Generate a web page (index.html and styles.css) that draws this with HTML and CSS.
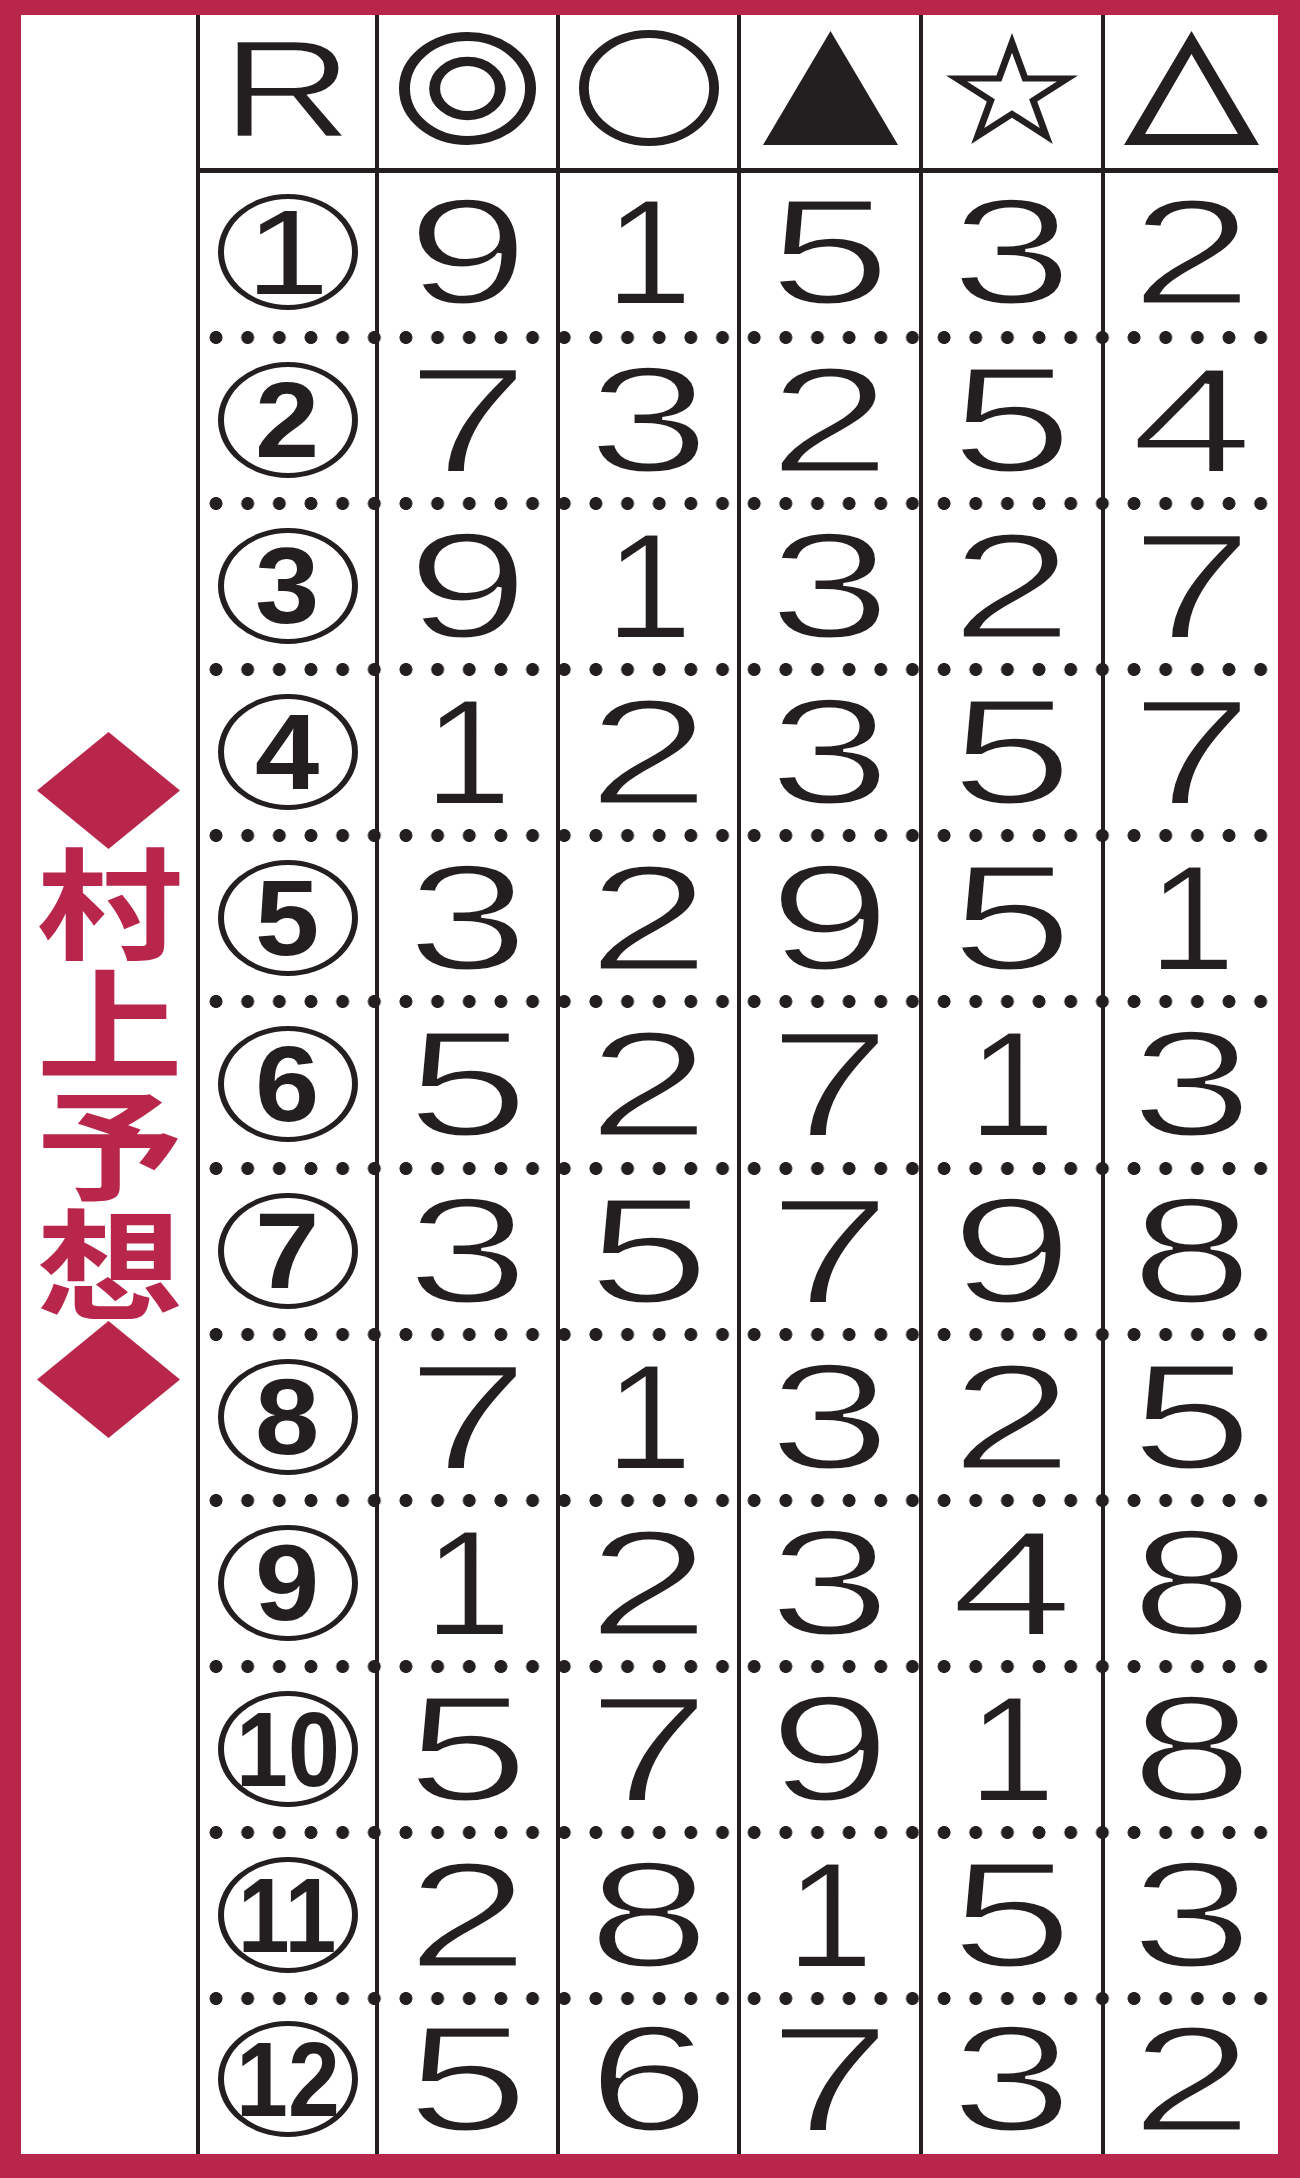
FILE: index.html
```html
<!DOCTYPE html>
<html lang="ja">
<head>
<meta charset="utf-8">
<title>村上予想</title>
<link rel="stylesheet" href="styles.css">
</head>
<body>
<div class="frame">
  <aside class="side">
    <svg class="diamond" viewBox="0 0 100 100" preserveAspectRatio="none"><polygon points="50,0 100,50 50,100 0,50"/></svg>
    <div class="title">村上予想</div>
    <svg class="diamond" viewBox="0 0 100 100" preserveAspectRatio="none"><polygon points="50,0 100,50 50,100 0,50"/></svg>
  </aside>
  <div class="table">
    <div class="row head">
      <div><span class="rh">R</span></div>
      <div><svg class="mk mk-dbl" viewBox="0 0 100 100" preserveAspectRatio="none"><circle cx="50" cy="50" r="46"/><circle cx="50" cy="50" r="24"/></svg></div>
      <div><svg class="mk mk-ring" viewBox="0 0 100 100" preserveAspectRatio="none"><circle cx="50" cy="50" r="46.5"/></svg></div>
      <div><svg class="mk mk-tri" viewBox="0 0 100 100" preserveAspectRatio="none"><polygon points="50,0 100,100 0,100"/></svg></div>
      <div><svg class="mk mk-star" viewBox="0 0 100 100" preserveAspectRatio="none"><path fill-rule="evenodd" d="M50 0 L61.8 38.2 L100 38.2 L69.1 61.8 L80.9 100 L50 76.4 L19.1 100 L30.9 61.8 L0 38.2 L38.2 38.2 Z M50 17.69 L41.98 43.67 L16 43.67 L37.01 59.71 L28.99 85.69 L50 69.64 L71.01 85.69 L62.99 59.71 L84 43.67 L58.02 43.67 Z"/></svg></div>
      <div><svg class="mk mk-otri" viewBox="0 0 100 100" preserveAspectRatio="none"><path fill-rule="evenodd" d="M50 0 L100 100 L0 100 Z M50 20.2 L15.6 90.4 L84.4 90.4 Z"/></svg></div>
    </div>

    <div class="row first">
      <div><span class="circ"><span class="cn c1">1</span></span></div>
      <div><span class="n">9</span></div><div><span class="n one">1</span></div><div><span class="n">5</span></div><div><span class="n">3</span></div><div><span class="n">2</span></div>
    </div>
    <div class="sep"><div></div><div></div><div></div><div></div><div></div><div></div></div>
    <div class="row mid">
      <div><span class="circ"><span class="cn">2</span></span></div>
      <div><span class="n">7</span></div><div><span class="n">3</span></div><div><span class="n">2</span></div><div><span class="n">5</span></div><div><span class="n">4</span></div>
    </div>
    <div class="sep"><div></div><div></div><div></div><div></div><div></div><div></div></div>
    <div class="row mid">
      <div><span class="circ"><span class="cn">3</span></span></div>
      <div><span class="n">9</span></div><div><span class="n one">1</span></div><div><span class="n">3</span></div><div><span class="n">2</span></div><div><span class="n">7</span></div>
    </div>
    <div class="sep"><div></div><div></div><div></div><div></div><div></div><div></div></div>
    <div class="row mid">
      <div><span class="circ"><span class="cn">4</span></span></div>
      <div><span class="n one">1</span></div><div><span class="n">2</span></div><div><span class="n">3</span></div><div><span class="n">5</span></div><div><span class="n">7</span></div>
    </div>
    <div class="sep"><div></div><div></div><div></div><div></div><div></div><div></div></div>
    <div class="row mid">
      <div><span class="circ"><span class="cn">5</span></span></div>
      <div><span class="n">3</span></div><div><span class="n">2</span></div><div><span class="n">9</span></div><div><span class="n">5</span></div><div><span class="n one">1</span></div>
    </div>
    <div class="sep"><div></div><div></div><div></div><div></div><div></div><div></div></div>
    <div class="row mid">
      <div><span class="circ"><span class="cn">6</span></span></div>
      <div><span class="n">5</span></div><div><span class="n">2</span></div><div><span class="n">7</span></div><div><span class="n one">1</span></div><div><span class="n">3</span></div>
    </div>
    <div class="sep"><div></div><div></div><div></div><div></div><div></div><div></div></div>
    <div class="row mid">
      <div><span class="circ"><span class="cn">7</span></span></div>
      <div><span class="n">3</span></div><div><span class="n">5</span></div><div><span class="n">7</span></div><div><span class="n">9</span></div><div><span class="n">8</span></div>
    </div>
    <div class="sep"><div></div><div></div><div></div><div></div><div></div><div></div></div>
    <div class="row mid">
      <div><span class="circ"><span class="cn">8</span></span></div>
      <div><span class="n">7</span></div><div><span class="n one">1</span></div><div><span class="n">3</span></div><div><span class="n">2</span></div><div><span class="n">5</span></div>
    </div>
    <div class="sep"><div></div><div></div><div></div><div></div><div></div><div></div></div>
    <div class="row mid">
      <div><span class="circ"><span class="cn">9</span></span></div>
      <div><span class="n one">1</span></div><div><span class="n">2</span></div><div><span class="n">3</span></div><div><span class="n">4</span></div><div><span class="n">8</span></div>
    </div>
    <div class="sep"><div></div><div></div><div></div><div></div><div></div><div></div></div>
    <div class="row mid">
      <div><span class="circ"><span class="cn c2">10</span></span></div>
      <div><span class="n">5</span></div><div><span class="n">7</span></div><div><span class="n">9</span></div><div><span class="n one">1</span></div><div><span class="n">8</span></div>
    </div>
    <div class="sep"><div></div><div></div><div></div><div></div><div></div><div></div></div>
    <div class="row mid">
      <div><span class="circ"><span class="cn c2">11</span></span></div>
      <div><span class="n">2</span></div><div><span class="n">8</span></div><div><span class="n one">1</span></div><div><span class="n">5</span></div><div><span class="n">3</span></div>
    </div>
    <div class="sep"><div></div><div></div><div></div><div></div><div></div><div></div></div>
    <div class="row last">
      <div><span class="circ"><span class="cn c2">12</span></span></div>
      <div><span class="n">5</span></div><div><span class="n">6</span></div><div><span class="n">7</span></div><div><span class="n">3</span></div><div><span class="n">2</span></div>
    </div>
  </div>
</div>
</body>
</html>
```

FILE: styles.css
```css
* {
  box-sizing: border-box;
  margin: 0;
  padding: 0;
}

html, body {
  margin: 0;
  background: #ffffff;
}

.frame {
  width: 1300px;
  height: 2178px;
  display: flex;
  background: #ffffff;
  border-style: solid;
  border-color: #b9264b;
  border-width: 15px 22px 24px 21px;
}

/* left caption column */
.side {
  width: 175px;
  flex: none;
  display: flex;
  flex-direction: column;
  align-items: center;
  justify-content: center;
}

.diamond {
  display: block;
  width: 143px;
  height: 117px;
  fill: #b9264b;
}

.title {
  writing-mode: vertical-rl;
  text-orientation: upright;
  height: 472px;
  font-family: "Noto Sans CJK JP", "Noto Sans CJK SC", sans-serif;
  font-weight: 700;
  font-size: 118px;
  line-height: 1;
  letter-spacing: 0;
  color: #b9264b;
  transform: scale(1.24, 1.02);
}

/* table */
.table {
  flex: 1;
  display: flex;
  flex-direction: column;
  color: #231f20;
  font-family: "Liberation Sans", Arial, sans-serif;
}

.row,
.sep {
  display: grid;
  grid-template-columns: 179px 181px 181px 182px 182px 177px;
}

.row > div,
.sep > div {
  border-left: 4px solid #231f20;
  display: flex;
  align-items: center;
  justify-content: center;
}

.head {
  height: 158px;
  border-bottom: 5px solid #231f20;
}

.head > div {
  padding-bottom: 6px;
}

.first {
  height: 158px;
}

.mid {
  height: 154.2px;
}

.last {
  flex: 1;
}

.sep {
  height: 13px;
  margin-bottom: -1px;
  background-image: radial-gradient(circle, #231f20 6.1px, rgba(35, 31, 32, 0) 6.8px);
  background-size: 31.67px 13px;
  background-repeat: repeat-x;
  background-position: 4.2px 0;
}

/* header marks */
.rh {
  display: inline-block;
  font-size: 139px;
  line-height: 1;
  transform: scaleX(1.32);
  -webkit-text-stroke: 2.4px #ffffff;
}

.mk {
  display: block;
  fill: #231f20;
}

.mk-dbl {
  width: 137px;
  height: 113px;
  fill: none;
  stroke: #231f20;
  stroke-width: 8;
}

.mk-ring {
  width: 140px;
  height: 116px;
  fill: none;
  stroke: #231f20;
  stroke-width: 7;
}

.mk-tri {
  width: 135px;
  height: 114px;
}

.mk-star {
  width: 132px;
  height: 111px;
}

.mk-otri {
  width: 135px;
  height: 114px;
}

/* race numbers */
.circ {
  width: 140px;
  height: 116px;
  border: 5px solid #231f20;
  border-left-width: 6px;
  border-right-width: 6px;
  border-radius: 50%;
  display: flex;
  align-items: center;
  justify-content: center;
}

.cn {
  display: inline-block;
  font-weight: 700;
  font-size: 108px;
  line-height: 1;
  transform: scaleX(1.07);
}

.cn.c1 {
  font-weight: 400;
  font-size: 120px;
  transform: scaleX(1.25);
}

.cn.c2 {
  font-size: 106px;
  transform: scaleX(0.88);
}

/* predicted numbers */
.n {
  display: inline-block;
  font-size: 150px;
  line-height: 1;
  transform: scaleX(1.47);
  -webkit-text-stroke: 3px #ffffff;
}

.n.one {
  transform: scaleX(1.05);
  -webkit-text-stroke: 2px #ffffff;
}
```
